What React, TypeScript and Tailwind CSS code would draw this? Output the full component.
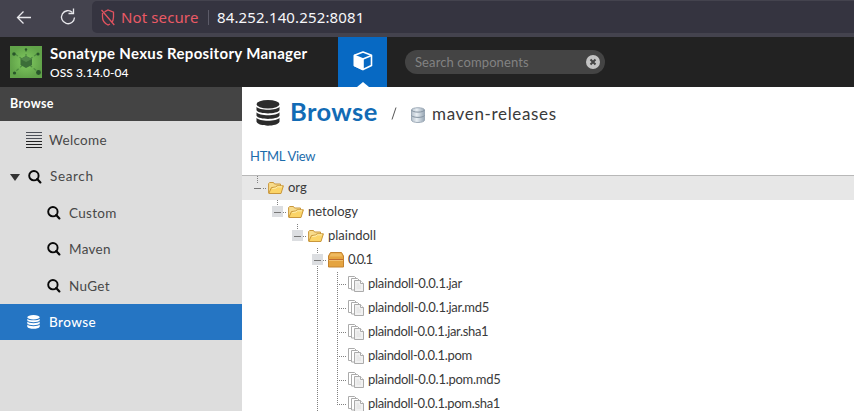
import React from 'react';

const SearchIcon = () => (
  <svg width="14" height="14" viewBox="0 0 14 14" fill="none" stroke="#080808" className="shrink-0">
    <circle cx="5.9" cy="5.7" r="4.7" strokeWidth="1.9" />
    <path d="M9.2 9l3.2 3.4" strokeWidth="2.2" strokeLinecap="round" />
  </svg>
);

const Database = ({ w, h, color }: { w: number; h: number; color: string }) => (
  <svg width={w} height={h} viewBox="0 0 24 26" preserveAspectRatio="none" fill={color} className="shrink-0">
    <ellipse cx="12" cy="4.2" rx="11.5" ry="4.2" />
    <path d="M.5 6.8C3 10.8 21 10.8 23.5 6.8V10.300C21 14.500 3 14.500 .5 10.300z" />
    <path d="M.5 12.300C3 16.300 21 16.300 23.500 12.300V15.800C21 20 3 20 .5 15.800z" />
    <path d="M.5 17.800C3 21.800 21 21.800 23.500 17.800V21.800C21 27 3 27 .5 21.800z" />
  </svg>
);

const Folder = () => (
  <svg width="16" height="16" viewBox="0 0 16 16" className="shrink-0">
    <path d="M.6 13V3.600L1.600 2.500H5.500L6.500 4H12.500V6.500" fill="#f8dc8c" stroke="#c9973c" />
    <path d="M.8 13.500L3.400 7.600L7.500 7L9 5.800H15.400L13 13.500z" fill="#fbd467" stroke="#c9973c" />
    <path d="M4.300 8.500L8 8L9.500 6.800H14" fill="none" stroke="#fff0b4" />
  </svg>
);

const Package = () => (
  <svg width="16" height="16" viewBox="0 0 16 16" className="shrink-0">
    <path d="M.5 7.500V4L2.500 .5H13.500L15.500 4V15H.5z" fill="#e5a440" stroke="#c4832f" />
    <path d="M3 1.500H13L14.500 4.500H1.500z" fill="#efba60" />
    <path d="M1 7.500H15" stroke="#c06a30" />
    <path d="M1 8.500H15" stroke="#f2c170" />
  </svg>
);

const Files = () => (
  <svg width="17" height="16" viewBox="0 0 17 16" fill="#fff" stroke="#ababab" className="-mr-px shrink-0">
    <path d="M.5 12.500V.5H6.500L8.500 2.500V12.500z" />
    <path d="M3.500 14V2.500H9.500L11.500 4.500V14z" />
    <path d="M6.500 15.500V4.500H12.500L15.500 7.500V15.500z" fill="#f1f1f1" />
    <path d="M12.500 4.500V7.500H15.500" />
    <path d="M8.500 8H11M8.500 10H13M8.500 12H13" stroke="#dedede" />
  </svg>
);

const Branch = ({ boxed, through }: { boxed: boolean; through?: boolean }) => (
  <svg width="20" height="24" viewBox="0 0 20 24" fill="none" className="shrink-0">
    <path d={through ? 'M9.500 0V24' : 'M9.500 0V7'} stroke="#808080" strokeDasharray="1 1" />
    {boxed && <rect x="4" y="6" width="11" height="11" fill="#dcdee1" />}
    <path d="M6 12.500H13" stroke="#777" />
    <path d="M15 12.500H19" stroke="#808080" strokeDasharray="1 1" />
  </svg>
);

const LeafBranch = ({ last }: { last: boolean }) => (
  <svg width="40" height="24" viewBox="0 0 40 24" fill="none" stroke="#808080" strokeDasharray="1 1" className="shrink-0">
    <path d="M9.500 0V24" />
    <path d={last ? 'M29.500 0V13' : 'M29.500 0V24'} />
    <path d="M31 12.500H39" />
  </svg>
);

const files = [
  { name: 'plaindoll-0.0.1.jar', cls: 'tracking-[-0.26px]' },
  { name: 'plaindoll-0.0.1.jar.md5', cls: 'tracking-[-0.26px]' },
  { name: 'plaindoll-0.0.1.jar.sha1', cls: 'tracking-[-0.34px]' },
  { name: 'plaindoll-0.0.1.pom', cls: 'tracking-[-0.32px]' },
  { name: 'plaindoll-0.0.1.pom.md5', cls: 'tracking-[-0.26px]' },
  { name: 'plaindoll-0.0.1.pom.sha1', cls: 'tracking-[-0.33px]' },
];

const folders = [
  { name: 'org', row: 'bg-[#e7e7e7] pl-[6px]' },
  { name: 'netology', row: 'pl-[26px]' },
  { name: 'plaindoll', row: 'pl-[46px]' },
];

const searches = ['Custom', 'Maven', 'NuGet'];

function AddressBar() {
  return (
    <div className="flex h-[37px] shrink-0 items-start bg-[#44434e] pt-px font-['Noto_Sans',sans-serif]">
      <svg width="92" height="32" viewBox="0 0 92 32" fill="none" stroke="#e8e8ec" strokeWidth="1.3" className="shrink-0">
        <path d="M31 16.500H17.500M23.500 10.500L17.500 16.500L23.500 22.500" />
        <path d="M72.500 11.500A6.500 6.500 0 1 0 74.500 16.500" />
        <path d="M73.500 7.500V12.500H68.500" />
      </svg>
      <div className="flex h-8 flex-1 items-center rounded-l-[5px] bg-[#353440] pl-[9px]">
        <svg width="14" height="17" viewBox="0 0 14 17" fill="none" stroke="#e2535f" strokeWidth="1.3" className="shrink-0">
          <path d="M3.500 2.800L7 1L12.500 3.200V8C12.500 11 11.700 12.500 10.500 13.800M9 15L7 16C3 14.200 1.500 11.500 1.500 8V4M.5 1L13.300 16" />
        </svg>
        <span className="ml-[6px] w-[79px] whitespace-nowrap text-[15px] tracking-[0.12px] text-[#ea5a66]">Not secure</span>
        <span className="ml-[8px] h-[15px] w-px bg-[#5c5b68]" />
        <span className="ml-[8px] whitespace-nowrap text-[15px] tracking-[0.14px] text-[#f7f7fa]">84.252.140.252:8081</span>
      </div>
    </div>
  );
}

function Header() {
  return (
    <header className="flex h-[50px] shrink-0 bg-[#222]">
      <svg width="32" height="32" viewBox="0 0 32 32" className="ml-[10px] mt-[9px] shrink-0">
        <defs>
          <radialGradient id="leaf"><stop stopColor="#82cb61" /><stop offset="1" stopColor="#61a349" /></radialGradient>
        </defs>
        <rect width="32" height="32" fill="url(#leaf)" />
        <path d="M16 16L5 8M16 16L27 8M16 16L5 26M16 16L28 26M16 16V4" stroke="#4c8a40" strokeWidth="1.200" strokeDasharray="3 2" />
        <path d="M16 10L22 13V19L16 22L10.500 19V13z" fill="#3b6e38" />
        <path d="M16 10L22 13L16 16L10.500 13z" fill="#518849" />
        <g fill="#28562a"><circle cx="4" cy="8" r="1.800" /><circle cx="28" cy="8" r="1.600" /><circle cx="4.500" cy="27" r="1.600" /><circle cx="28.500" cy="26.500" r="2.400" /><circle cx="16" cy="3.500" r="1.200" /></g>
      </svg>
      <div className="ml-2 w-[288px] whitespace-nowrap text-white">
        <div className="mt-[6px] text-[15px] font-bold leading-5 tracking-[0.32px]">Sonatype Nexus Repository Manager</div>
        <div className="mt-[2px] text-[12px] font-medium leading-4 tracking-[0.08px]">OSS 3.14.0-04</div>
      </div>
      <div className="flex h-[50px] w-[49px] shrink-0 flex-col items-center bg-[#0769c3]">
        <svg width="20" height="20" viewBox="0 0 20 20" className="mt-[14px]" fill="none" stroke="#fff" strokeWidth="1.600" strokeLinejoin="round">
          <path d="M10 1L18.500 4.200V14.500L10 18.500L1.500 14.500V4.200z" />
          <path d="M1.500 4.500L10 8V18.500L1.500 14.500z" fill="#fff" />
          <path d="M10 8L18.500 4.500" />
        </svg>
        <svg width="12" height="5" viewBox="0 0 12 5" className="mt-auto"><path d="M0 5L6 0L12 5z" fill="#fff" /></svg>
      </div>
      <div className="ml-[18px] mt-[13px] flex h-6 w-[200px] items-center rounded-full bg-[#444] pl-[10px] pr-[5px]">
        <span className="flex-1 whitespace-nowrap pt-[2px] text-[13px] tracking-[0.1px] text-[#828282]">Search components</span>
        <svg width="14" height="14" viewBox="0 0 14 14"><circle cx="7" cy="7" r="7" fill="#c3c3c3" /><path d="M4.500 4.500L9.500 9.500M9.500 4.500L4.500 9.500" stroke="#444" strokeWidth="2" /></svg>
      </div>
    </header>
  );
}

function Sidebar() {
  return (
    <aside className="flex w-[242px] shrink-0 flex-col bg-[#ddd] text-[13.5px] text-[#484848]">
      <div className="mb-px flex h-[34px] shrink-0 items-center bg-[#444] pl-[10px] text-[12.5px] font-bold tracking-[0.35px] text-white">Browse</div>
      <div className="flex h-[36.4px] shrink-0 items-center pl-[26px]">
        <svg width="16" height="17" viewBox="0 0 16 17" stroke="#222" className="mt-px"><path d="M0 .5H16M0 3.500H16M0 6.500H16" stroke="#4c5058" /><path d="M0 9.500H16M0 12.500H16M0 15.500H16" /></svg>
        <span className="ml-[7px] tracking-[0.3px]">Welcome</span>
      </div>
      <div className="flex h-[36.4px] shrink-0 items-center pl-[10px]">
        <svg width="10" height="7" viewBox="0 0 10 7" className="mt-px"><path d="M0 0H10L5 7z" fill="#333" /></svg>
        <span className="ml-2 flex"><SearchIcon /></span>
        <span className="ml-2 tracking-[0.65px]">Search</span>
      </div>
      {searches.map((name) => (
        <div key={name} className="flex h-[36.4px] shrink-0 items-center pl-[47px]">
          <SearchIcon />
          <span className="ml-2 tracking-[0.3px]">{name}</span>
        </div>
      ))}
      <div className="flex h-9 shrink-0 items-center bg-[#2575c3] pl-[27px] text-white">
        <Database w={13} h={14} color="#fff" />
        <span className="ml-[9px] font-medium tracking-[0.45px]">Browse</span>
      </div>
    </aside>
  );
}

function Content() {
  return (
    <main className="flex min-w-0 flex-1 flex-col bg-white text-[#3a3a3a]">
      <div className="flex h-[52px] shrink-0 items-center pl-[14px]">
        <Database w={24} h={26} color="#2b2b2b" />
        <h1 className="-mt-[3px] ml-[10px] w-[101px] text-[25.5px] font-bold tracking-[0.4px] text-[#126bb5]">Browse</h1>
        <svg width="6" height="13" viewBox="0 0 6 13" className="shrink-0"><path d="M5 .5L1 12.500" stroke="#555" /></svg>
        <svg width="16" height="16" viewBox="0 0 16 16" className="ml-[13px] mt-[3px] shrink-0">
          <defs><linearGradient id="steel"><stop stopColor="#b4bfca" /><stop offset=".4" stopColor="#e9eff4" /><stop offset="1" stopColor="#98a7b5" /></linearGradient></defs>
          <path d="M1.500 3C1.500 0 14.500 0 14.500 3V13C14.500 16.300 1.500 16.300 1.500 13z" fill="url(#steel)" stroke="#9daab7" />
          <path d="M1.500 3C2 5.800 14 5.800 14.500 3M1.500 8.500C3 11 13 11 14.500 8.500" fill="none" stroke="#8492a0" />
        </svg>
        <span className="ml-[6px] mt-[2px] whitespace-nowrap text-[17px] tracking-[0.66px]">maven-releases</span>
      </div>
      <div className="flex h-9 shrink-0 items-center pl-2 text-[13px] tracking-[-0.28px] text-[#1c6cab]">HTML View</div>
      <div className="border-t border-[#b8b8b8] text-[13px]">
        {folders.map((f, i) => (
          <div key={f.name} className={`flex h-6 items-center ${f.row}`}>
            <Branch boxed={i > 0} />
            <Folder />
            <span className="ml-1 tracking-[0px]">{f.name}</span>
          </div>
        ))}
        <div className="flex h-6 items-center pl-[66px]">
          <Branch boxed through />
          <Package />
          <span className="ml-1 tracking-[-0.95px]">0.0.1</span>
        </div>
        {files.map((f, i) => (
          <div key={f.name} className="flex h-6 items-center pl-[66px]">
            <LeafBranch last={i === files.length - 1} />
            <Files />
            <span className={`ml-1 whitespace-nowrap ${f.cls}`}>{f.name}</span>
          </div>
        ))}
      </div>
    </main>
  );
}

export default function App() {
  return (
    <div className="flex h-[411px] w-[854px] flex-col overflow-hidden bg-white font-['Lato','Noto_Sans',sans-serif]">
      <AddressBar />
      <Header />
      <div className="flex min-h-0 flex-1">
        <Sidebar />
        <Content />
      </div>
    </div>
  );
}
